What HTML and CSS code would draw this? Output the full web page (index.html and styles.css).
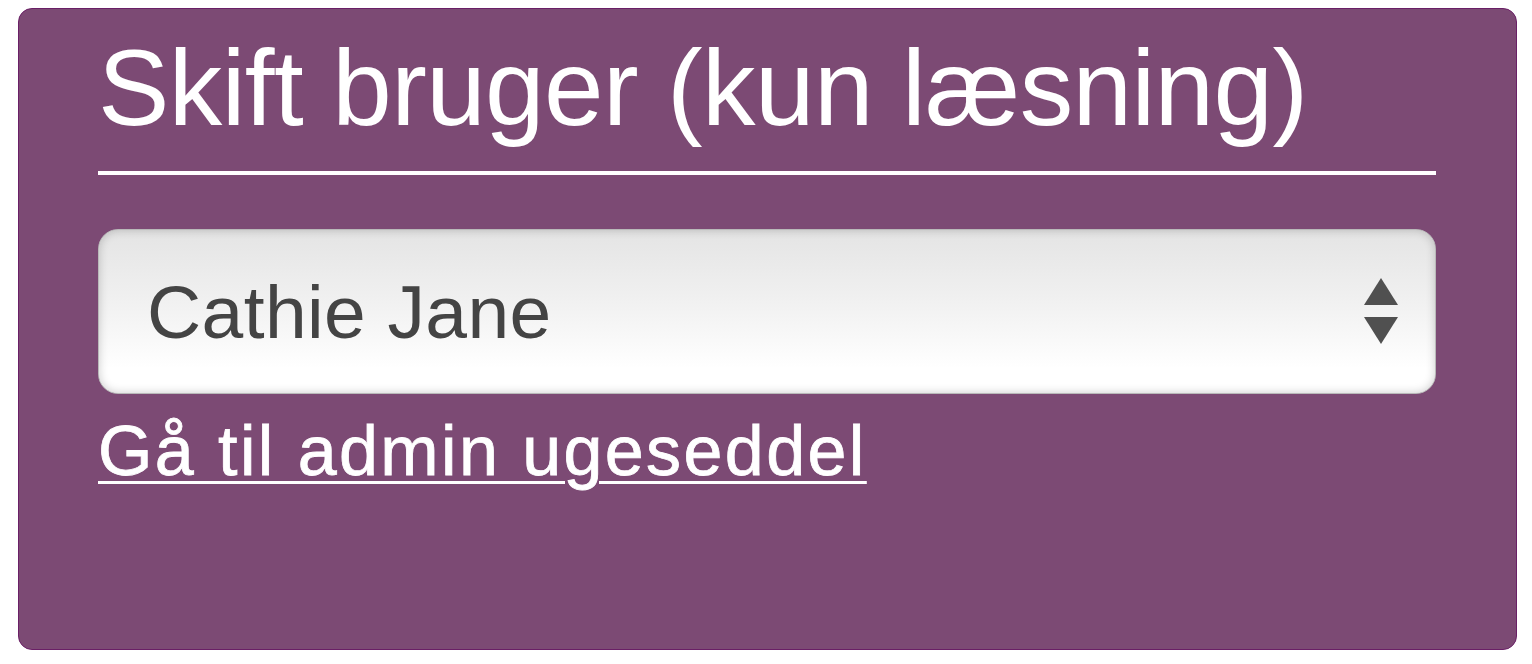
FILE: index.html
```html
<!DOCTYPE html>
<html lang="da">
<head>
  <meta charset="UTF-8">
  <title>Skift bruger</title>
  <link rel="stylesheet" href="styles.css">
</head>
<body>
  <div class="panel">
    <h2 class="panel-title">Skift bruger (kun læsning)</h2>
    <div class="select-wrap">
      <select class="user-select" id="user">
        <option>Cathie Jane</option>
        <option>Anders Holm</option>
        <option>Mette Lund</option>
      </select>
      <svg class="select-arrows" width="36" height="68" viewBox="0 0 36 68">
        <polygon points="18,0 35,27 1,27" fill="#505050"/>
        <polygon points="1,39 35,39 18,66" fill="#505050"/>
      </svg>
    </div>
    <a class="admin-link" href="#">Gå til admin ugeseddel</a>
  </div>
</body>
</html>
```

FILE: styles.css
```css
body {
  margin: 0;
  padding: 8px 15px 0 18px;
  background: #fff;
  font-family: 'Liberation Sans', Arial, sans-serif;
}
.panel {
  box-sizing: border-box;
  width: 1499px;
  height: 642px;
  padding: 18px 80px 0 79px;
  background: #7c4a74;
  border: 1px solid #6a1f66;
  border-radius: 14px;
}
.panel-title {
  margin: 0;
  padding-bottom: 21px;
  font-size: 107px;
  font-weight: normal;
  line-height: 123px;
  letter-spacing: -0.6px;
  color: #fff;
  border-bottom: 4px solid #fff;
  white-space: nowrap;
}
.select-wrap {
  position: relative;
  margin-top: 54px;
}
.user-select {
  display: block;
  box-sizing: border-box;
  width: 100%;
  height: 165px;
  padding: 0 90px 0 48px;
  font-family: 'Liberation Sans', Arial, sans-serif;
  font-size: 75px;
  letter-spacing: 0.4px;
  color: #444;
  -webkit-appearance: none;
  appearance: none;
  background: linear-gradient(#e4e4e4, #f1f1f1 45%, #fff 85%);
  border: 1px solid #b9b9b9;
  border-radius: 20px;
  box-shadow: inset 0 0 10px rgba(0,0,0,0.2);
  outline: none;
}
.select-arrows {
  position: absolute;
  right: 37px;
  top: 49px;
  pointer-events: none;
}
.admin-link {
  display: inline-block;
  margin-top: 17px;
  font-size: 70px;
  line-height: 80px;
  letter-spacing: 2.4px;
  color: #fff;
  -webkit-text-stroke: 0.8px #fff;
  text-decoration: underline;
  text-decoration-thickness: 3px;
  text-underline-offset: 6px;
}
```
